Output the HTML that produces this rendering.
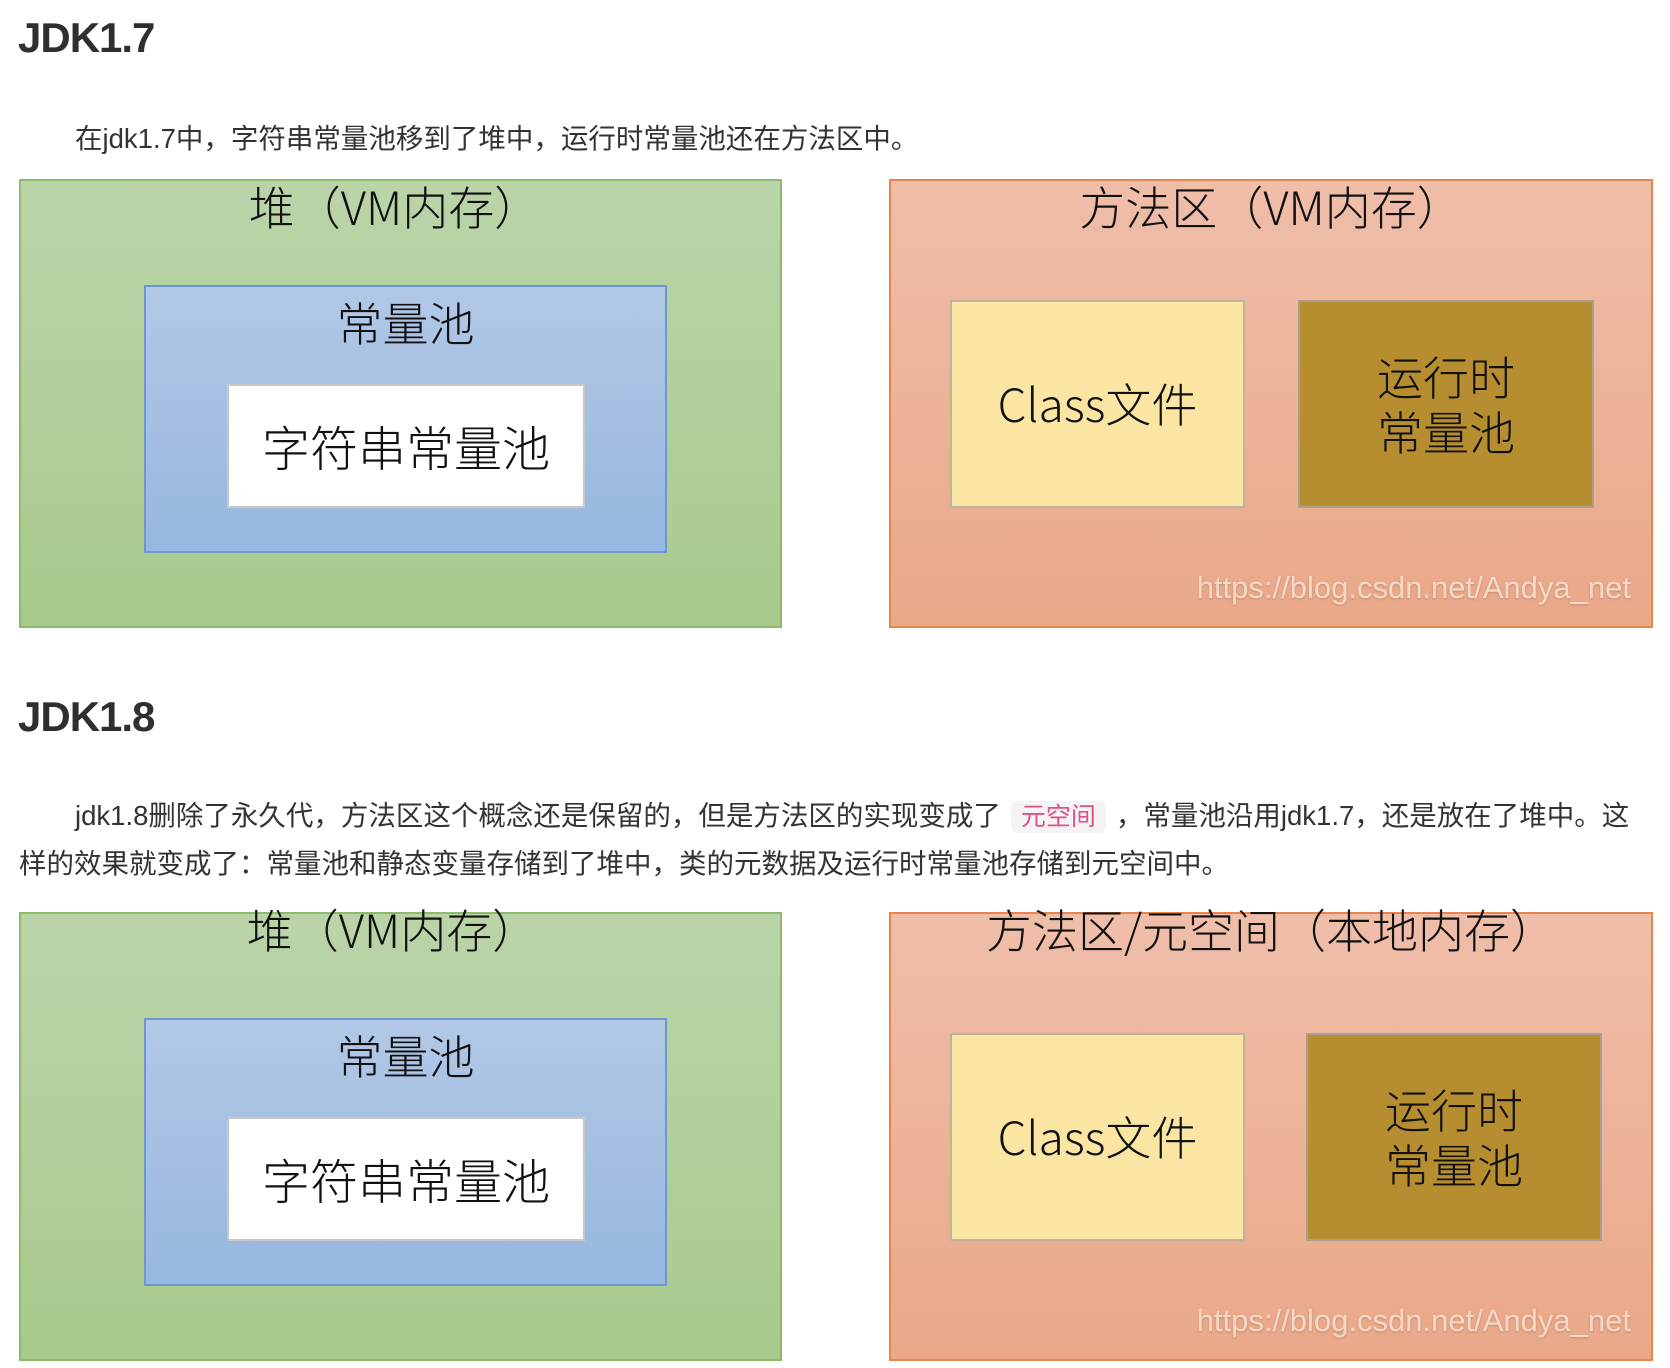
<!DOCTYPE html>
<html><head><meta charset="utf-8"><style>
*{margin:0;padding:0;box-sizing:border-box}
body{width:1670px;height:1368px;background:#fff;position:relative;overflow:hidden;font-family:"Liberation Sans","Noto Sans CJK SC",sans-serif;color:#333}
.a{position:absolute}
h1{position:absolute;left:18px;font-size:42px;font-weight:bold;color:#2f2f2f;font-family:"Liberation Sans",sans-serif;letter-spacing:-1px}
.p{position:absolute;left:19px;font-size:27.5px;color:#333;white-space:nowrap}
.green{background:linear-gradient(#bad4a9,#a8ca8c);border:2px solid #8ebb69}
.blue{background:linear-gradient(#b2c8e6,#96b7df);border:2px solid #6e97d0}
.orange{background:linear-gradient(#efbea9,#eaa888);border:2px solid #e8844d}
.white{background:#fff;border:2px solid #c8c8c8}
.yellow{background:#fbe5a3;border:2px solid #bdb4a0}
.gold{background:#b68e2f;border:2px solid #a8a090}
.t{font-family:"Noto Sans CJK SC",sans-serif;font-weight:300;color:#111;text-align:center;font-size:46px;line-height:1.2}
.c{display:flex;align-items:center;justify-content:center}
.wm{position:absolute;right:20px;font-size:31px;color:rgba(255,240,230,.75);font-family:"Liberation Sans",sans-serif;text-shadow:0 1px 2px rgba(120,60,30,.3)}
.code{background:#f4f4f4;color:#e0508a;border-radius:6px;padding:2px 10px;font-size:25px;margin:0 10px}
</style></head><body>
<h1 style="top:14px">JDK1.7</h1>
<div class="p" style="top:116px;left:75px">在jdk1.7中，字符串常量池移到了堆中，运行时常量池还在方法区中。</div>

<div class="a green" style="left:19px;top:179px;width:763px;height:449px">
 <div class="t" style="position:absolute;left:-12px;right:0;top:-2px">堆（VM内存）</div>
 <div class="a blue" style="left:123px;top:104px;width:523px;height:268px">
  <div class="t" style="position:absolute;left:0;right:0;top:8px">常量池</div>
  <div class="a white c t" style="left:81px;top:97px;width:358px;height:124px;font-size:48px">字符串常量池</div>
 </div>
</div>
<div class="a orange" style="left:889px;top:179px;width:764px;height:449px">
 <div class="t" style="position:absolute;left:0;right:0;top:-2px">方法区（VM内存）</div>
 <div class="a yellow c t" style="left:59px;top:119px;width:295px;height:208px">Class文件</div>
 <div class="a gold c t" style="left:407px;top:119px;width:296px;height:208px">运行时<br>常量池</div>
 <div class="wm" style="top:389px">https://blog.csdn.net/Andya_net</div>
</div>

<h1 style="top:693px">JDK1.8</h1>
<div class="p" style="top:793px;left:75px">jdk1.8删除了永久代，方法区这个概念还是保留的，但是方法区的实现变成了<span class="code">元空间</span>，常量池沿用jdk1.7，还是放在了堆中。这</div>
<div class="p" style="top:841px">样的效果就变成了：常量池和静态变量存储到了堆中，类的元数据及运行时常量池存储到元空间中。</div>

<div class="a green" style="left:19px;top:912px;width:763px;height:449px">
 <div class="t" style="position:absolute;left:-16px;right:0;top:-12px">堆（VM内存）</div>
 <div class="a blue" style="left:123px;top:104px;width:523px;height:268px">
  <div class="t" style="position:absolute;left:0;right:0;top:8px">常量池</div>
  <div class="a white c t" style="left:81px;top:97px;width:358px;height:124px;font-size:48px">字符串常量池</div>
 </div>
</div>
<div class="a orange" style="left:889px;top:912px;width:764px;height:449px">
 <div class="t" style="position:absolute;left:0;right:0;top:-12px">方法区/元空间（本地内存）</div>
 <div class="a yellow c t" style="left:59px;top:119px;width:295px;height:208px">Class文件</div>
 <div class="a gold c t" style="left:415px;top:119px;width:296px;height:208px">运行时<br>常量池</div>
 <div class="wm" style="top:389px">https://blog.csdn.net/Andya_net</div>
</div>
</body></html>
